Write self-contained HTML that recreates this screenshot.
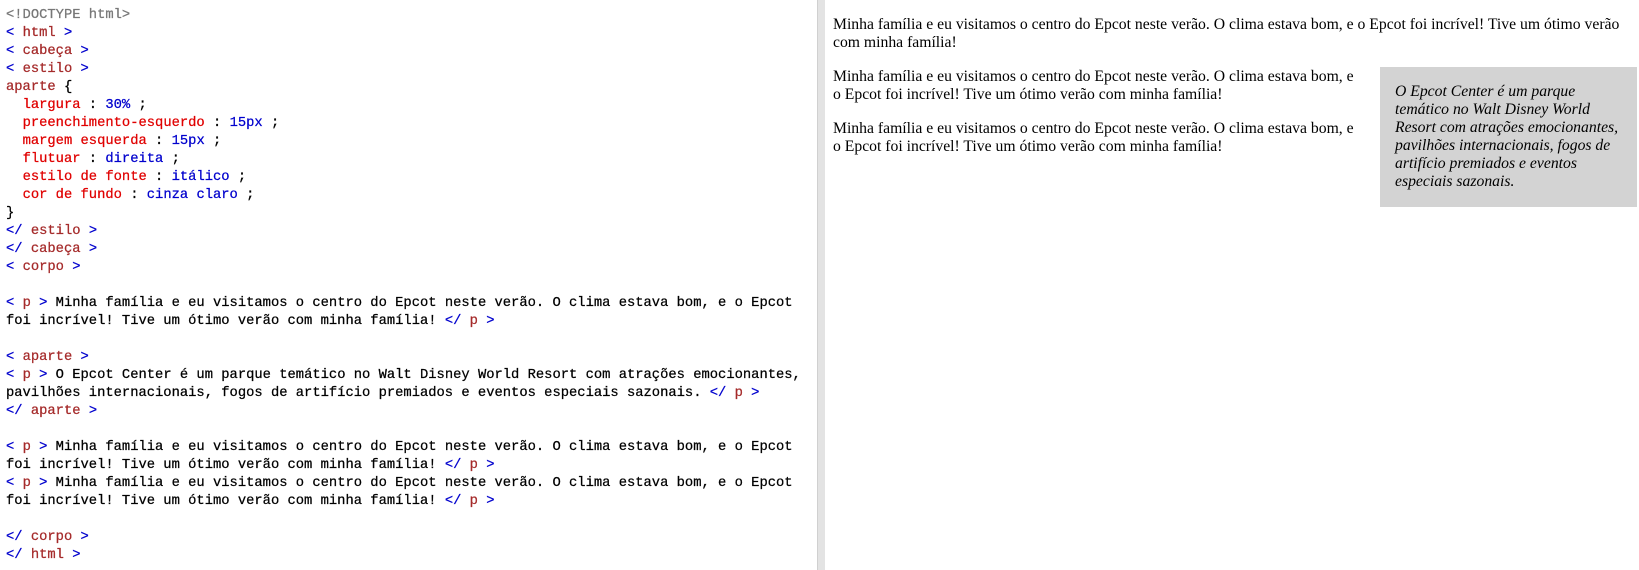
<!DOCTYPE html>
<html><head><meta charset="utf-8">
<style>
html,body{margin:0;padding:0;width:1639px;height:570px;overflow:hidden;background:#fff}
#code{position:absolute;left:0;top:0;width:817px;height:570px;}
#code pre{margin:0;position:absolute;left:6px;top:7px;font-family:"Liberation Mono",monospace;font-size:13.8px;line-height:18px;color:#000;-webkit-text-stroke:0.25px currentColor}
.b{color:#0000cd}.t{color:#a52a2a}.r{color:#e00000}.v{color:#0000cd}.g{color:#777}
#div{position:absolute;left:817px;top:0;width:8px;height:570px;background:#e3e3e3;border-left:1px solid #d0d0d0;box-sizing:border-box}
#res{position:absolute;left:825px;top:0;width:814px;height:570px;box-sizing:border-box;padding:16px 2px 0 8px;font-family:"Liberation Serif",serif;font-size:15.7px;line-height:18px;color:#000}
#res p{margin:0 0 16px}
aside{float:right;width:230px;padding-left:15px;padding-right:12px;margin-left:15px;font-style:italic;background:#d3d3d3;margin-top:-1px}
aside p{margin:16px 0!important}
</style></head><body>
<div id="code"><pre><span class="g">&lt;!DOCTYPE html&gt;</span>
<span class="b">&lt;</span> <span class="t">html</span> <span class="b">&gt;</span>
<span class="b">&lt;</span> <span class="t">cabeça</span> <span class="b">&gt;</span>
<span class="b">&lt;</span> <span class="t">estilo</span> <span class="b">&gt;</span>
<span class="t">aparte</span> {
  <span class="r">largura</span> : <span class="v">30%</span> ;
  <span class="r">preenchimento-esquerdo</span> : <span class="v">15px</span> ;
  <span class="r">margem esquerda</span> : <span class="v">15px</span> ;
  <span class="r">flutuar</span> : <span class="v">direita</span> ;
  <span class="r">estilo de fonte</span> : <span class="v">itálico</span> ;
  <span class="r">cor de fundo</span> : <span class="v">cinza claro</span> ;
}
<span class="b">&lt;/</span> <span class="t">estilo</span> <span class="b">&gt;</span>
<span class="b">&lt;/</span> <span class="t">cabeça</span> <span class="b">&gt;</span>
<span class="b">&lt;</span> <span class="t">corpo</span> <span class="b">&gt;</span>

<span class="b">&lt;</span> <span class="t">p</span> <span class="b">&gt;</span> Minha família e eu visitamos o centro do Epcot neste verão. O clima estava bom, e o Epcot
foi incrível! Tive um ótimo verão com minha família! <span class="b">&lt;/</span> <span class="t">p</span> <span class="b">&gt;</span>

<span class="b">&lt;</span> <span class="t">aparte</span> <span class="b">&gt;</span>
<span class="b">&lt;</span> <span class="t">p</span> <span class="b">&gt;</span> O Epcot Center é um parque temático no Walt Disney World Resort com atrações emocionantes,
pavilhões internacionais, fogos de artifício premiados e eventos especiais sazonais. <span class="b">&lt;/</span> <span class="t">p</span> <span class="b">&gt;</span>
<span class="b">&lt;/</span> <span class="t">aparte</span> <span class="b">&gt;</span>

<span class="b">&lt;</span> <span class="t">p</span> <span class="b">&gt;</span> Minha família e eu visitamos o centro do Epcot neste verão. O clima estava bom, e o Epcot
foi incrível! Tive um ótimo verão com minha família! <span class="b">&lt;/</span> <span class="t">p</span> <span class="b">&gt;</span>
<span class="b">&lt;</span> <span class="t">p</span> <span class="b">&gt;</span> Minha família e eu visitamos o centro do Epcot neste verão. O clima estava bom, e o Epcot
foi incrível! Tive um ótimo verão com minha família! <span class="b">&lt;/</span> <span class="t">p</span> <span class="b">&gt;</span>

<span class="b">&lt;/</span> <span class="t">corpo</span> <span class="b">&gt;</span>
<span class="b">&lt;/</span> <span class="t">html</span> <span class="b">&gt;</span></pre></div>
<div id="div"></div>
<div id="res">
<p>Minha família e eu visitamos o centro do Epcot neste verão. O clima estava bom, e o Epcot foi incrível! Tive um ótimo verão com minha família!</p>
<aside><p>O Epcot Center é um parque temático no Walt Disney World Resort com atrações emocionantes, pavilhões internacionais, fogos de artifício premiados e eventos especiais sazonais.</p></aside>
<p>Minha família e eu visitamos o centro do Epcot neste verão. O clima estava bom, e o Epcot foi incrível! Tive um ótimo verão com minha família!</p>
<p>Minha família e eu visitamos o centro do Epcot neste verão. O clima estava bom, e o Epcot foi incrível! Tive um ótimo verão com minha família!</p>
</div>
</body></html>
